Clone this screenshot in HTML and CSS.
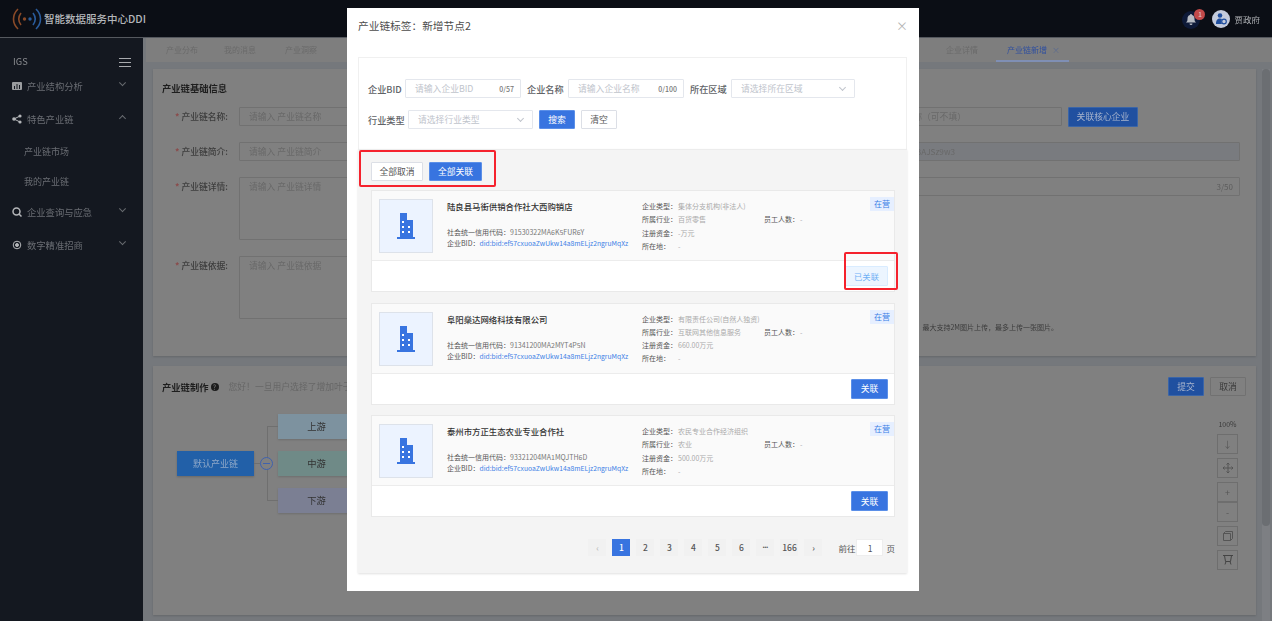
FILE: index.html
```html
<!DOCTYPE html>
<html>
<head>
  <title>产业链新增</title>
  <link rel="stylesheet" href="styles.css">
</head>
<body>
  <svg class="defs" width="0" height="0">
    <symbol id="building" viewBox="0 0 18 26">
      <path fill="#3874e0" d="M3 0h7v7h6v17h2v2H0v-2h3z"/>
      <path fill="#fff" d="M5 8h2v2H5zM5 13h2v2H5zM11 13h2v2h-2zM5 18h2v2H5zM11 18h2v2h-2z"/>
    </symbol>
  </svg>

  <div class="header">
    <div class="brand">
      <svg class="brand-icon" width="30" height="22" viewBox="0 0 30 22" fill="none" stroke-width="1.6">
        <path stroke="#8a4a28" d="M6 1C0 7 0 15 6 21"/>
        <path stroke="#8a4a28" d="M9 5C6 9 6 13 9 17"/>
        <circle cx="12.500" cy="11" r="1.700" fill="#8a4a28" stroke="none"/>
        <circle cx="18" cy="11" r="1.700" fill="#2a5c9c" stroke="none"/>
        <path stroke="#2a5c9c" d="M21 5C24 9 24 13 21 17"/>
        <path stroke="#2a5c9c" d="M24 1C30 7 30 15 24 21"/>
      </svg>
      <span class="brand-name">智能数据服务中心DDI</span>
    </div>
    <div class="user-box">
      <span class="bell">
        <svg width="10" height="11" viewBox="0 0 10 11"><path fill="#b8bcc4" d="M5 0a1 1 0 0 1 1 1c2 .5 2.500 2 2.500 4 0 2 .5 2.500 1.500 3.500H0C1 7.500 1.500 7 1.500 5c0-2 .5-3.500 2.500-4a1 1 0 0 1 1-1zM3.500 9.500h3a1.500 1.500 0 0 1-3 0z"/></svg>
        <span class="badge">1</span>
      </span>
      <span class="avatar">
        <svg width="12" height="12" viewBox="0 0 12 12"><circle cx="5" cy="2.500" r="2.300" fill="#1f4e9e"/><path fill="#1f4e9e" d="M1 11c0-4 1.500-5.500 4-5.500 1 0 1.500.2 2 .5-1 1.500-1 3.500 0 5z"/><circle cx="9" cy="8.500" r="2.300" fill="none" stroke="#1f4e9e" stroke-width="1.200"/></svg>
      </span>
      <span class="user-name">贾政府</span>
    </div>
  </div>

  <div class="layout">
    <div class="sidebar">
      <div class="side-top">
        <span>IGS</span>
        <span class="burger"><i></i><i></i><i></i></span>
      </div>
      <div class="menu-item">
        <svg class="menu-icon" viewBox="0 0 10 10"><path fill="#9a9c9f" d="M1 1h8a1 1 0 0 1 1 1v6a1 1 0 0 1-1 1H1a1 1 0 0 1-1-1V2a1 1 0 0 1 1-1z"/><path fill="#141820" d="M2 5h1v3H2zM4.500 3h1v5h-1zM7 4h1v4H7z"/></svg>
        <span class="menu-text">产业结构分析</span>
        <span class="chev down"></span>
      </div>
      <div class="menu-item">
        <svg class="menu-icon" viewBox="0 0 10 10"><g fill="#b4b6b9"><circle cx="8" cy="2" r="1.600"/><circle cx="2" cy="5" r="1.800"/><circle cx="8" cy="8" r="1.600"/></g><path stroke="#b4b6b9" d="M8 2 2 5l6 3" fill="none"/></svg>
        <span class="menu-text">特色产业链</span>
        <span class="chev up"></span>
      </div>
      <div class="sub-item">产业链市场</div>
      <div class="sub-item">我的产业链</div>
      <div class="menu-item">
        <svg class="menu-icon" viewBox="0 0 10 10" fill="none" stroke="#b4b6b9" stroke-width="1.500"><circle cx="4.500" cy="4.500" r="3.500"/><path d="m7 7 2.500 2.500"/></svg>
        <span class="menu-text">企业查询与应急</span>
        <span class="chev down"></span>
      </div>
      <div class="menu-item">
        <svg class="menu-icon" viewBox="0 0 10 10" fill="none" stroke="#b4b6b9"><circle cx="5" cy="5" r="3.800"/><circle cx="5" cy="5" r="1.500" fill="#b4b6b9"/></svg>
        <span class="menu-text">数字精准招商</span>
        <span class="chev down"></span>
      </div>
    </div>

    <div class="main">
      <div class="tabs">
        <span class="tab">产业分布</span>
        <span class="tab">我的消息</span>
        <span class="tab">产业洞察</span>
        <span class="tab tab-push">企业详情</span>
        <span class="tab tab-active">产业链新增<em>×</em></span>
      </div>
      <div class="content">
        <div class="panels">
          <div class="panel panel-base">
            <div class="panel-title">产业链基础信息</div>
            <div class="form-grid">
              <div class="field">
                <label><b>*</b> 产业链名称:</label>
                <div class="input">请输入 产业链名称</div>
              </div>
              <div class="field field-core">
                <div class="input input-end">核心企业名称（可不填）</div>
                <button class="btn btn-primary btn-core">关联核心企业</button>
              </div>
              <div class="field">
                <label><b>*</b> 产业链简介:</label>
                <div class="input">请输入 产业链简介</div>
              </div>
              <div class="field">
                <div class="input input-end input-disabled">did:bid:zf2BAJSz9w3</div>
              </div>
              <div class="field field-tall">
                <label><b>*</b> 产业链详情:</label>
                <div class="input textarea">请输入 产业链详情</div>
              </div>
              <div class="field field-top">
                <div class="input input-end">节点2<span class="count">3/50</span></div>
              </div>
              <div class="field field-tall">
                <label><b>*</b> 产业链依据:</label>
                <div class="input textarea">请输入 产业链依据</div>
              </div>
              <div class="field field-hint">
                <span class="upload-hint">最大支持2M图片上传，最多上传一张图片。</span>
              </div>
            </div>
          </div>

          <div class="panel panel-chain">
            <div class="chain-head">
              <span class="panel-title">产业链制作</span>
              <span class="help">?</span>
              <span class="chain-hint">您好！一旦用户选择了增加叶子节点，该节点将不可再被修改</span>
              <span class="chain-actions">
                <button class="btn btn-primary">提交</button>
                <button class="btn">取消</button>
              </span>
            </div>
            <div class="chain-body">
              <div class="tree">
                <div class="root-node">默认产业链</div>
                <span class="fold"></span>
                <div class="branches">
                  <div class="node node-up">上游</div>
                  <div class="node node-mid">中游</div>
                  <div class="node node-down">下游</div>
                </div>
              </div>
              <div class="zoom-tools">
                <span class="zoom-rate">100%</span>
                <span class="tool">↓</span>
                <span class="tool">
                  <svg width="10" height="10" viewBox="0 0 10 10" fill="none" stroke="#555"><path d="M5 0v10M0 5h10M3.500 1.500 5 0l1.500 1.500M3.500 8.500 5 10l1.500-1.500M1.500 3.500 0 5l1.500 1.500M8.500 3.500 10 5 8.500 6.500"/></svg>
                </span>
                <span class="tool tool-joined">+</span>
                <span class="tool tool-joined-end">-</span>
                <span class="tool">
                  <svg width="10" height="10" viewBox="0 0 10 10" fill="none" stroke="#555"><path d="M.5 2.500h7v7h-7zM.5 2.500l2-2h7v7l-2 2"/></svg>
                </span>
                <span class="tool">
                  <svg width="10" height="10" viewBox="0 0 10 10" fill="none" stroke="#444"><path d="M0 .5h10M1.500.5l1 6h5l1-6M3 6.500 2 9.500M7 6.500l1 3"/></svg>
                </span>
              </div>
            </div>
          </div>
        </div>
        <div class="scrollbar"><div class="scroll-thumb"></div></div>
      </div>
    </div>
  </div>

  <div class="modal">
    <div class="modal-head">
      <span class="modal-title">产业链标签：新增节点2</span>
      <span class="modal-close">×</span>
    </div>

    <div class="search-card">
      <div class="search-row">
        <span class="s-label s-label-bid">企业BID</span>
        <div class="s-input s-w-bid"><span>请输入企业BID</span><i>0/57</i></div>
        <span class="s-label">企业名称</span>
        <div class="s-input s-w-name"><span>请输入企业名称</span><i>0/100</i></div>
        <span class="s-label">所在区域</span>
        <div class="s-input s-w-area"><span>请选择所在区域</span><b class="s-arrow"></b></div>
      </div>
      <div class="search-row">
        <span class="s-label s-label-type">行业类型</span>
        <div class="s-input s-w-type"><span>请选择行业类型</span><b class="s-arrow"></b></div>
        <button class="btn btn-primary s-btn">搜索</button>
        <button class="btn s-btn">清空</button>
      </div>
    </div>

    <div class="list-area">
      <div class="list-toolbar">
        <button class="btn bar-btn">全部取消</button>
        <button class="btn btn-primary bar-btn bar-btn-wide">全部关联</button>
      </div>

      <div class="card-list">
        <div class="card">
          <div class="card-body">
            <div class="logo-box"><svg width="18" height="26"><use href="#building"/></svg></div>
            <div class="card-left">
              <div class="company">陆良县马街供销合作社大西购销店</div>
              <div class="code-line">社会统一信用代码：<span>91530322MA6K5FUR6Y</span></div>
              <div class="code-line">企业BID：<a href="#">did:bid:ef57cxuoaZwUkw14a8mELjz2ngruMqXz</a></div>
            </div>
            <div class="card-right">
              <div class="info-line"><span>企业类型：</span><em>集体分支机构(非法人)</em></div>
              <div class="info-line"><span>所属行业：</span><em class="info-short">百货零售</em><span>员工人数：</span><em>-</em></div>
              <div class="info-line"><span>注册资金：</span><em>-万元</em></div>
              <div class="info-line"><span>所在地：</span><em>-</em></div>
            </div>
            <span class="tag">在营</span>
          </div>
          <div class="card-foot">
            <button class="btn btn-linked">已关联</button>
            <span class="mark-linked"></span>
          </div>
        </div>

        <div class="card">
          <div class="card-body">
            <div class="logo-box"><svg width="18" height="26"><use href="#building"/></svg></div>
            <div class="card-left">
              <div class="company">阜阳燊达网络科技有限公司</div>
              <div class="code-line">社会统一信用代码：<span>91341200MA2MYT4P5N</span></div>
              <div class="code-line">企业BID：<a href="#">did:bid:ef57cxuoaZwUkw14a8mELjz2ngruMqXz</a></div>
            </div>
            <div class="card-right">
              <div class="info-line"><span>企业类型：</span><em>有限责任公司(自然人独资)</em></div>
              <div class="info-line"><span>所属行业：</span><em class="info-short">互联网其他信息服务</em><span>员工人数：</span><em>-</em></div>
              <div class="info-line"><span>注册资金：</span><em>660.00万元</em></div>
              <div class="info-line"><span>所在地：</span><em>-</em></div>
            </div>
            <span class="tag">在营</span>
          </div>
          <div class="card-foot">
            <button class="btn btn-primary btn-link">关联</button>
          </div>
        </div>

        <div class="card">
          <div class="card-body">
            <div class="logo-box"><svg width="18" height="26"><use href="#building"/></svg></div>
            <div class="card-left">
              <div class="company">泰州市方正生态农业专业合作社</div>
              <div class="code-line">社会统一信用代码：<span>93321204MA1MQJTH6D</span></div>
              <div class="code-line">企业BID：<a href="#">did:bid:ef57cxuoaZwUkw14a8mELjz2ngruMqXz</a></div>
            </div>
            <div class="card-right">
              <div class="info-line"><span>企业类型：</span><em>农民专业合作经济组织</em></div>
              <div class="info-line"><span>所属行业：</span><em class="info-short">农业</em><span>员工人数：</span><em>-</em></div>
              <div class="info-line"><span>注册资金：</span><em>500.00万元</em></div>
              <div class="info-line"><span>所在地：</span><em>-</em></div>
            </div>
            <span class="tag">在营</span>
          </div>
          <div class="card-foot">
            <button class="btn btn-primary btn-link">关联</button>
          </div>
        </div>
      </div>

      <div class="pager">
        <span class="page-item page-off">‹</span>
        <span class="page-item page-on">1</span>
        <span class="page-item">2</span>
        <span class="page-item">3</span>
        <span class="page-item">4</span>
        <span class="page-item">5</span>
        <span class="page-item">6</span>
        <span class="page-item page-more">•••</span>
        <span class="page-item">166</span>
        <span class="page-item">›</span>
        <span class="page-jump">前往</span>
        <span class="page-input">1</span>
        <span class="page-unit">页</span>
      </div>
    </div>
  </div>
</body>
</html>
```

FILE: styles.css
```css
html,
body {
  margin: 0;
  padding: 0;
  height: 100%;
  overflow: hidden;
  font-family: "Noto Sans CJK SC", "Noto Sans", sans-serif;
  font-size: 9px;
  color: #333;
}

/* the screenshot is a soft, rescaled capture */
body {
  filter: blur(0.3px);
}

.defs {
  position: absolute;
}

button {
  font-family: inherit;
}

/* Page behind the dialog, in its dimmed colours */

.header {
  height: 38px;
  background: #0b0e15;
  border-bottom: 1px solid #55585e;
  box-sizing: border-box;
  display: flex;
  justify-content: space-between;
  align-items: center;
  padding: 0 12px;
}

.brand {
  display: flex;
  align-items: center;
  gap: 2px;
}

.brand-name {
  color: #b4b6ba;
  font-size: 10.500px;
  font-weight: 500;
}

.user-box {
  display: flex;
  align-items: center;
  color: #b0b2b6;
  font-size: 8.500px;
}

.bell {
  position: relative;
  width: 18px;
  height: 18px;
  margin-top: 2px;
  border-radius: 50%;
  background: #0e1a38;
  display: flex;
  align-items: center;
  justify-content: center;
}

.badge {
  position: absolute;
  top: -2px;
  right: -5px;
  width: 11px;
  height: 11px;
  border-radius: 50%;
  background: #c24a4a;
  color: #e0d0d0;
  font-size: 7px;
  line-height: 11px;
  text-align: center;
}

.avatar {
  width: 18px;
  height: 18px;
  border-radius: 50%;
  background: #c4cbdc;
  margin-left: 12px;
  display: flex;
  align-items: center;
  justify-content: center;
}

.user-name {
  margin-left: 4px;
}

.layout {
  display: flex;
  height: calc(100vh - 38px);
}

.sidebar {
  width: 143px;
  flex-shrink: 0;
  background: #141820;
  color: #6a6d73;
  font-size: 9.300px;
}

.side-top {
  display: flex;
  justify-content: space-between;
  align-items: center;
  padding: 14px 12px 0 13px;
  height: 17px;
  color: #8c8e92;
}

.burger {
  width: 12px;
  display: flex;
  flex-direction: column;
  gap: 2.500px;
  margin-top: 4px;
}

.burger i {
  height: 1.500px;
  background: #a8aaae;
}

.menu-item {
  height: 33px;
  display: flex;
  align-items: center;
  padding: 0 16px 0 12px;
}

.menu-icon {
  width: 10px;
  height: 10px;
  margin-right: 5px;
}

.menu-text {
  flex: 1;
}

.chev {
  width: 4px;
  height: 4px;
  border-right: 1px solid #686b70;
  border-bottom: 1px solid #686b70;
  margin: 0 2px;
}

.chev.down {
  transform: rotate(45deg) translate(-2px, -2px);
}

.chev.up {
  transform: rotate(225deg);
}

.sub-item {
  height: 30px;
  line-height: 33px;
  padding-left: 24px;
  font-size: 9px;
}

.main {
  flex: 1;
  min-width: 0;
  background: #75787c;
  display: flex;
  flex-direction: column;
}

.tabs {
  height: 24px;
  margin: 0 0 0 3px;
  background: #7e7e7e;
  display: flex;
  align-items: stretch;
  color: #6a6a6a;
  font-size: 8px;
  flex-shrink: 0;
}

.tab {
  line-height: 23px;
  margin-right: 26px;
}

.tab:first-child {
  margin-left: 20px;
}

.tab:nth-child(3) {
  margin-left: 3px;
}

.tab-push {
  margin-left: auto;
  margin-right: 18px;
}

.tab-active {
  width: 73px;
  box-sizing: border-box;
  margin-right: 203px;
  padding-left: 11px;
  color: #2f4f9f;
  border-bottom: 2px solid #7f8fb5;
}

.tab-active em {
  font-style: normal;
  margin-left: 5px;
  color: #5a6a90;
}

.content {
  flex: 1;
  min-height: 0;
  display: flex;
  padding-top: 7px;
}

.panels {
  flex: 1;
  min-width: 0;
  padding-left: 10px;
  display: flex;
  flex-direction: column;
  gap: 10px;
}

.panel {
  background: #808080;
  box-shadow: 0 1px 2px rgba(0, 0, 0, 0.15);
}

.panel-base {
  height: 287px;
  padding: 12px 16px 0 9px;
  box-sizing: border-box;
}

.panel-title {
  font-size: 9.300px;
  font-weight: 700;
  color: #1e1e1e;
}

.form-grid {
  display: grid;
  grid-template-columns: 1fr 1fr;
  grid-template-rows: 19px 19px 63px 63px;
  row-gap: 16px;
  column-gap: 20px;
  margin-top: 12px;
}

.field {
  display: flex;
  align-items: center;
  min-width: 0;
}

.field-tall,
.field-top,
.field-hint {
  align-items: flex-start;
}

.field-core {
  margin-right: 102px;
}

.field-hint {
  justify-content: flex-end;
  margin-top: 66px;
}

.field label {
  width: 66px;
  flex-shrink: 0;
  text-align: right;
  margin-right: 11px;
  color: #3c3c3c;
  font-size: 8.800px;
  font-weight: 500;
}

.field label b {
  color: #8a4a4a;
}

.field-tall label {
  padding-top: 3px;
}

.input {
  flex: 1;
  height: 19px;
  box-sizing: border-box;
  border: 1px solid #717171;
  padding: 0 9px;
  line-height: 17px;
  color: #686868;
  font-size: 8.800px;
  white-space: nowrap;
  overflow: hidden;
  border-radius: 1px;
}

.input-end {
  text-align: right;
  padding-right: 95px;
}

.field-core .input-end {
  margin-right: 6px;
}

.input-disabled {
  padding-right: 284px;
  background: #797b7f;
  font-size: 8.200px;
}

.field-top .input-end {
  position: relative;
  text-align: left;
  padding: 0 6px;
}

.count {
  position: absolute;
  right: 6px;
  top: 0;
  color: #5c5c5c;
  font-size: 8px;
}

.textarea {
  height: 63px;
}

.upload-hint {
  color: #3a3a3a;
  font-size: 7px;
  margin-right: 182px;
}

.btn {
  height: 19px;
  box-sizing: border-box;
  border: 1px solid #dcdfe6;
  background: #fff;
  color: #555;
  font-size: 8.800px;
  padding: 0;
  border-radius: 1px;
}

.btn-primary {
  background: #3874e0;
  border-color: #5b8fe8;
  color: #fff;
}

.panel .btn {
  background: #808080;
  border-color: #717171;
  color: #3a3a3a;
}

.panel .btn-primary {
  background: #2050a0;
  border-color: #3a65a8;
  color: #a8b4cc;
}

.panel .btn-core {
  width: 70px;
  height: 20px;
  flex-shrink: 0;
}

.panel-chain {
  flex: 1;
  margin-bottom: 6px;
  padding: 11px 10px 0 9px;
}

.chain-head {
  display: flex;
  align-items: center;
  height: 19px;
}

.help {
  width: 8px;
  height: 8px;
  margin-left: 2px;
  border-radius: 50%;
  background: #1c1c1c;
  color: #808080;
  font-size: 7px;
  line-height: 8px;
  text-align: center;
}

.chain-hint {
  margin-left: 10px;
  color: #666;
  font-size: 8.800px;
}

.chain-actions {
  margin-left: auto;
  display: flex;
  gap: 6px;
}

.chain-actions .btn {
  width: 36px;
}

.chain-body {
  display: flex;
  justify-content: space-between;
}

/* Tree nodes */

.tree {
  display: flex;
  align-items: center;
  padding: 18px 0 0 15px;
  height: 99px;
}

.root-node {
  width: 77px;
  height: 25px;
  line-height: 25px;
  text-align: center;
  background: #2260a8;
  color: #8fa8c8;
  font-size: 9px;
  box-shadow: 0 1px 2px rgba(0, 0, 0, 0.2);
}

.fold {
  position: relative;
  width: 13px;
  height: 13px;
  margin-left: 6px;
  border: 1px solid #3f62ae;
  box-sizing: border-box;
  border-radius: 50%;
  background: #808080;
  z-index: 1;
}

.fold::before {
  content: "";
  position: absolute;
  left: -7px;
  top: 5px;
  width: 6px;
  height: 1px;
  background: #6f6f6f;
}

.fold::after {
  content: "";
  position: absolute;
  left: 2px;
  right: 2px;
  top: 5px;
  height: 1px;
  background: #3f62ae;
}

.branches {
  display: flex;
  flex-direction: column;
  gap: 12px;
  margin-left: 5px;
  position: relative;
}

.branches::before {
  content: "";
  position: absolute;
  left: -11px;
  top: 12px;
  bottom: 12px;
  width: 10px;
  border: 1px solid #6f6f6f;
  border-right: 0;
}

.node {
  width: 77px;
  height: 25px;
  line-height: 25px;
  text-align: center;
  font-size: 9.300px;
  color: #333;
  box-shadow: 0 1px 2px rgba(0, 0, 0, 0.15);
}

.node-up {
  background: #7d929f;
}

.node-mid {
  background: #6f8a87;
}

.node-down {
  background: #7b7f93;
}

.zoom-tools {
  width: 21px;
  margin: 22px 8px 0 0;
  display: flex;
  flex-direction: column;
  align-items: center;
  gap: 4px;
}

.zoom-rate {
  font-size: 7px;
  line-height: 12px;
  color: #3a3a3a;
}

.tool {
  width: 21px;
  height: 20px;
  flex-shrink: 0;
  box-sizing: border-box;
  border: 1px solid #6e6e6e;
  display: flex;
  align-items: center;
  justify-content: center;
  color: #555;
  font-size: 9px;
}

.tool-joined {
  margin-bottom: -4px;
}

.scrollbar {
  width: 8px;
  margin: 0 2px 0 6px;
  background: #7d7f83;
  flex-shrink: 0;
}

.scroll-thumb {
  height: 457px;
  border-radius: 4px;
  background: #6b6e72;
}

/* Dialog */

.modal {
  position: absolute;
  left: 347px;
  top: 8px;
  width: 572px;
  height: 583px;
  background: #fff;
  box-sizing: border-box;
  padding: 0 12px 0 11px;
}

.modal-head {
  height: 49px;
  display: flex;
  justify-content: space-between;
  align-items: center;
  padding-bottom: 14px;
  box-sizing: border-box;
}

.modal-title {
  font-size: 10.700px;
  color: #4c4c4c;
}

.modal-close {
  font-size: 12px;
  color: #b4b4b4;
  margin-right: -1px;
}

.search-card {
  height: 93px;
  box-sizing: border-box;
  border: 1px solid #f0f0f0;
  border-bottom: 0;
  padding: 21px 0 0 9px;
  display: flex;
  flex-direction: column;
  gap: 12px;
}

.search-row {
  display: flex;
  align-items: center;
  height: 19px;
}

.s-label {
  width: 37px;
  margin-right: 4px;
  font-size: 9.200px;
  font-weight: 500;
  color: #606266;
  white-space: nowrap;
}

.s-label-bid {
  width: 31px;
  margin-right: 6px;
}

.s-label-type {
  width: 36px;
}

.s-input {
  height: 19px;
  margin-right: 6px;
  box-sizing: border-box;
  border: 1px solid #e4e7ed;
  padding: 0 6px 0 9px;
  display: flex;
  justify-content: space-between;
  align-items: center;
  color: #c0c4cc;
  font-size: 8.800px;
  border-radius: 1px;
}

.s-input i {
  font-style: normal;
  color: #777;
  font-size: 7px;
  font-weight: 500;
}

.s-arrow {
  width: 4px;
  height: 4px;
  margin: -3px 3px 0 0;
  border-right: 1px solid #c0c4cc;
  border-bottom: 1px solid #c0c4cc;
  transform: rotate(45deg);
}

.s-w-bid,
.s-w-name {
  width: 116px;
}

.s-w-area {
  width: 124px;
}

.s-w-type {
  width: 125px;
}

.s-btn {
  width: 36px;
  margin-right: 6px;
}

.list-area {
  height: 424px;
  margin-top: -1px;
  background: #f4f4f4;
  box-sizing: border-box;
  border-top: 1px solid #ececec;
  padding-left: 1px;
  box-shadow: 0 1px 2px rgba(0, 0, 0, 0.12);
}

.list-toolbar {
  width: 137px;
  height: 37px;
  box-sizing: border-box;
  border: 2px solid #f5222d;
  border-radius: 2px;
  padding: 10px 0 0 10px;
  display: flex;
  gap: 6px;
}

.bar-btn {
  width: 52px;
  height: 19px;
}

.bar-btn-wide {
  width: 53px;
}

.card-list {
  margin: 3px 12px 0 12px;
  display: flex;
  flex-direction: column;
  gap: 10.500px;
}

.card {
  height: 102px;
  box-sizing: border-box;
  border: 1px solid #e9e9e9;
  background: #fff;
}

.card-body {
  position: relative;
  height: 70px;
  box-sizing: border-box;
  background: #fafafa;
  border-bottom: 1px solid #ececec;
  padding: 8px 0 0 7px;
  display: flex;
}

.logo-box {
  width: 54px;
  height: 54px;
  box-sizing: border-box;
  flex-shrink: 0;
  background: #ecf3ff;
  border: 1px solid #dde2ea;
  display: flex;
  align-items: center;
  justify-content: center;
}

.card-left {
  width: 195px;
  margin-left: 14px;
  flex-shrink: 0;
}

.company {
  font-size: 8.400px;
  font-weight: 500;
  line-height: 12px;
  color: #333;
  margin: 1px 0 15px;
  white-space: nowrap;
}

.code-line {
  font-size: 7px;
  line-height: 11px;
  color: #555;
  white-space: nowrap;
}

.code-line span {
  color: #777;
}

.code-line a {
  color: #3c80e6;
  font-size: 6.750px;
  text-decoration: none;
}

.card-right {
  font-size: 7px;
  padding-top: 1px;
}

.info-line {
  display: flex;
  height: 13.300px;
  line-height: 12px;
  white-space: nowrap;
  color: #555;
}

.info-line span {
  width: 36px;
}

.info-line em {
  font-style: normal;
  color: #aaa;
}

.info-short {
  width: 86px;
}

.tag {
  position: absolute;
  right: 0;
  top: 6px;
  width: 24px;
  height: 14px;
  line-height: 14px;
  text-align: center;
  background: #e6efff;
  color: #3c80e6;
  font-size: 8px;
}

.card-foot {
  position: relative;
  display: flex;
  justify-content: flex-end;
  padding: 5px 6px 0 0;
}

.btn-link,
.btn-linked {
  width: 37px;
  height: 20px;
}

.btn-linked {
  width: 43px;
  background: #ecf5ff;
  border-color: #d9ecff;
  color: #6fb0f5;
  font-size: 8.300px;
}

.mark-linked {
  position: absolute;
  right: -4px;
  top: -9px;
  width: 54px;
  height: 38px;
  box-sizing: border-box;
  border: 2px solid #f5222d;
  border-radius: 2px;
}

.pager {
  margin: 22px 12px 0 0;
  display: flex;
  justify-content: flex-end;
  align-items: center;
  height: 17px;
  font-size: 8.500px;
  color: #555;
  font-weight: 500;
}

.page-item {
  width: 18px;
  height: 17px;
  line-height: 17px;
  margin-left: 6px;
  text-align: center;
  background: #f1f1f1;
  white-space: nowrap;
}

.page-off {
  color: #bbb;
}

.page-on {
  background: #3874e0;
  color: #fff;
}

.page-more {
  font-family: "Liberation Sans", sans-serif;
  font-size: 5px;
}

.page-jump {
  margin-left: 16px;
  font-weight: 400;
}

.page-input {
  width: 27px;
  height: 17px;
  line-height: 16px;
  margin-left: 1px;
  box-sizing: border-box;
  text-align: center;
  background: #fff;
  border: 1px solid #eee;
  font-weight: 400;
}

.page-unit {
  margin-left: 3px;
  font-weight: 400;
}
```
